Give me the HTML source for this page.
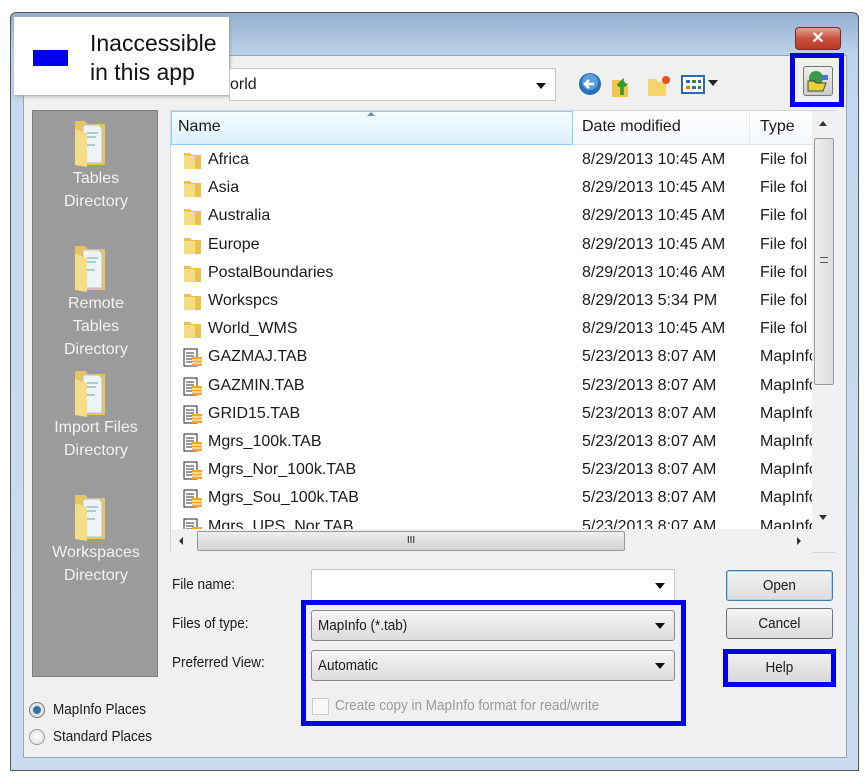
<!DOCTYPE html>
<html><head><meta charset="utf-8"><style>
*{margin:0;padding:0;box-sizing:border-box}
body{width:868px;height:780px;background:#fff;position:relative;overflow:hidden;font-family:"Liberation Sans",sans-serif;color:#1a1a1a}
.a{position:absolute}
.frame{left:10px;top:12px;width:849px;height:759px;border:1px solid #555;border-radius:6px 6px 0 0;background:linear-gradient(#94afd2 0,#bcd2ea 40px,#c5d9ee 100px,#c9dcef 100%)}
.body{left:23px;top:55px;width:824px;height:703px;background:#f0f0f0;border:1px solid #8fa7c1}
.sb{left:32px;top:110px;width:126px;height:567px;background:#9b9b9b;border:1px solid #7d7d7d}
.sbl{color:#f2f2f2;font-size:16px;text-align:center;width:126px;line-height:23px;left:0}
.list{left:170px;top:110px;width:666px;height:443px;background:#fff;border:1px solid #cfd6de}
.hdr{left:0;top:0;height:34px;width:641px;background:linear-gradient(#fff,#f3f8fc);border-bottom:1px solid #d8e2ec}
.row{position:absolute;left:0;height:28px;font-size:16px;line-height:28px;width:641px;white-space:nowrap}
.n{position:absolute;left:37px}
.d{position:absolute;left:411px}
.t{position:absolute;left:589px;width:52px;overflow:hidden}
.ic{position:absolute;left:12px;top:5px;width:20px;height:19px}
.lbl{font-size:15px;transform:scaleX(.9);transform-origin:left}
.cb{height:31px;border:1px solid #8a8a8a;border-radius:3px;background:linear-gradient(#f5f5f5,#dcdcdc);font-size:15px;line-height:29px;padding-left:6px}
.arr{position:absolute;right:9px;top:12px;border:5px solid transparent;border-top:6px solid #111;border-bottom:0}
.btn{width:107px;height:31px;border:1px solid #707070;border-radius:3px;background:linear-gradient(#f3f3f3,#dcdcdc);text-align:center;font-size:16px;line-height:29px}
.blue{border:5px solid #0000ee}
</style></head><body>
<div class="a frame"></div>
<div class="a" style="left:795px;top:27px;width:46px;height:23px;border-radius:4px;border:1px solid #7a2a20;background:linear-gradient(#e9a196,#c7503e 50%,#b83a26);color:#fff;text-align:center;font-weight:bold;font-size:16px;line-height:21px">✕</div>
<div class="a body"></div>
<div class="a" style="left:14px;top:17px;width:215px;height:78px;background:#fff;box-shadow:1px 1px 3px #999"></div>
<div class="a" style="left:33px;top:50px;width:35px;height:16px;background:#0000ee"></div>
<div class="a" style="left:90px;top:29px;font-size:23px;line-height:29px;color:#111">Inaccessible<br>in this app</div>
<div class="a" style="left:229px;top:68px;width:327px;height:33px;background:#fff;border:1px solid #c0c8d2;font-size:16px;line-height:31px">orld<span class="arr" style="top:14px"></span></div>
<svg class="a" style="left:578px;top:70px" width="130" height="30">
<circle cx="12" cy="14" r="11" fill="#2a6fb8"/><circle cx="12" cy="12" r="8" fill="#5aa0dc"/><path d="M16 14H8M11 10l-4 4 4 4" stroke="#fff" stroke-width="2.5" fill="none"/>
<path d="M34 10h8l2 3h6v14H34z" fill="#f2c64c"/><path d="M44 25V12l-4 4M44 12l4 4" stroke="#2e9a2e" stroke-width="3.5" fill="none"/>
<path d="M70 9h8l2 3h8v14H70z" fill="#f5d56a"/><circle cx="88" cy="10" r="4" fill="#e5501c"/>
<rect x="104" y="6" width="22" height="17" fill="#fff" stroke="#2c6ab2" stroke-width="2"/><rect x="108" y="10" width="4" height="3" fill="#2c6ab2"/><rect x="114" y="10" width="4" height="3" fill="#3b8a3b"/><rect x="120" y="10" width="3" height="3" fill="#2c6ab2"/><rect x="108" y="16" width="4" height="3" fill="#e07a1a"/><rect x="114" y="16" width="4" height="3" fill="#2c6ab2"/><rect x="120" y="16" width="3" height="3" fill="#2c6ab2"/>
</svg>
<div class="a" style="left:708px;top:80px;border:5px solid transparent;border-top:6px solid #222"></div>
<div class="a blue" style="left:790px;top:53px;width:54px;height:54px"></div>
<div class="a" style="left:803px;top:66px;width:30px;height:30px;border:1px solid #777;border-radius:3px;background:linear-gradient(#eee,#ccc)"></div>
<svg class="a" style="left:806px;top:69px" width="24" height="24"><circle cx="10" cy="9" r="7" fill="#3a9a4a"/><path d="M2 12h6l2 2h10l-3 8H2z" fill="#e8d23a" stroke="#444"/><rect x="15" y="6" width="7" height="5" fill="#4a7abf"/></svg>
<div class="a sb">
<svg class="a" style="left:40px;top:4px" width="36" height="54"><path d="M2 6h10l3 3h17v41H2z" fill="#e8c45a"/><path d="M10 10h16l3 3v35H10z" fill="#eef3f5" stroke="#b8c0c6"/><path d="M14 18h11M14 22h9M14 30h8" stroke="#6aa" /><path d="M2 14l12 4v34L2 50z" fill="#f6dc84"/></svg>
<div class="a sbl" style="top:56px">Tables<br>Directory</div>
<svg class="a" style="left:40px;top:129px" width="36" height="54"><path d="M2 6h10l3 3h17v41H2z" fill="#e8c45a"/><path d="M10 10h16l3 3v35H10z" fill="#eef3f5" stroke="#b8c0c6"/><path d="M14 18h11M14 22h9M14 30h8" stroke="#6aa" /><path d="M2 14l12 4v34L2 50z" fill="#f6dc84"/></svg>
<div class="a sbl" style="top:181px">Remote<br>Tables<br>Directory</div>
<svg class="a" style="left:40px;top:254px" width="36" height="54"><path d="M2 6h10l3 3h17v41H2z" fill="#e8c45a"/><path d="M10 10h16l3 3v35H10z" fill="#eef3f5" stroke="#b8c0c6"/><path d="M14 18h11M14 22h9M14 30h8" stroke="#6aa" /><path d="M2 14l12 4v34L2 50z" fill="#f6dc84"/></svg>
<div class="a sbl" style="top:305px">Import Files<br>Directory</div>
<svg class="a" style="left:40px;top:378px" width="36" height="54"><path d="M2 6h10l3 3h17v41H2z" fill="#e8c45a"/><path d="M10 10h16l3 3v35H10z" fill="#eef3f5" stroke="#b8c0c6"/><path d="M14 18h11M14 22h9M14 30h8" stroke="#6aa" /><path d="M2 14l12 4v34L2 50z" fill="#f6dc84"/></svg>
<div class="a sbl" style="top:430px">Workspaces<br>Directory</div>
</div>
<div class="a list">
<div class="a hdr">
<div class="a" style="left:0;top:0;width:402px;height:34px;background:linear-gradient(#f4fbff,#dcf0fb);border:1px solid #8fd0f0"></div>
<div class="a" style="left:7px;top:7px;font-size:16px">Name</div>
<div class="a" style="left:196px;top:1px;border:4px solid transparent;border-bottom:4px solid #6a8eb0;border-top:0"></div>
<div class="a" style="left:411px;top:7px;font-size:16px">Date modified</div>
<div class="a" style="left:578px;top:0;width:1px;height:34px;background:#e3e8ee"></div>
<div class="a" style="left:589px;top:7px;font-size:16px">Type</div>
</div>
<div id="rows"></div>
<div class="a" style="left:641px;top:0;width:24px;height:441px;background:#f1f1f1"></div>
<div class="a" style="left:648px;top:10px;border:4px solid transparent;border-bottom:5px solid #333;border-top:0"></div>
<div class="a" style="left:643px;top:27px;width:20px;height:247px;border:1px solid #999;border-radius:2px;background:linear-gradient(90deg,#eee,#dcdcdc)"></div>
<div class="a" style="left:649px;top:146px;width:8px;height:6px;border-top:1px solid #555;border-bottom:1px solid #555"></div>
<div class="a" style="left:648px;top:404px;border:4px solid transparent;border-top:5px solid #333;border-bottom:0"></div>
<div class="a" style="left:0;top:418px;width:641px;height:24px;background:#f1f1f1"></div>
<div class="a" style="left:8px;top:426px;border:4px solid transparent;border-right:4px solid #333;border-left:0"></div>
<div class="a" style="left:26px;top:420px;width:428px;height:20px;border:1px solid #999;border-radius:2px;background:linear-gradient(#eee,#d4d4d4);text-align:center;font-size:10px;line-height:18px">III</div>
<div class="a" style="left:626px;top:426px;border:4px solid transparent;border-left:4px solid #333;border-right:0"></div>
</div>
<div class="a lbl" style="left:172px;top:576px">File name:</div>
<div class="a lbl" style="left:172px;top:615px">Files of type:</div>
<div class="a lbl" style="left:172px;top:654px">Preferred View:</div>
<div class="a" style="left:311px;top:569px;width:364px;height:33px;background:#fff;border:1px solid #c5c5c5;border-radius:2px"><span class="arr" style="top:13px"></span></div>
<div class="a blue" style="left:301px;top:600px;width:385px;height:126px"></div>
<div class="a cb" style="left:311px;top:610px;width:364px"><span class="lbl" style="display:inline-block">MapInfo (*.tab)</span><span class="arr"></span></div>
<div class="a cb" style="left:311px;top:650px;width:364px"><span class="lbl" style="display:inline-block">Automatic</span><span class="arr"></span></div>
<div class="a" style="left:312px;top:698px;width:17px;height:17px;border:1px solid #ccc;background:#f8f8f8"></div>
<div class="a lbl" style="left:335px;top:697px;color:#9a9a9a">Create copy in MapInfo format for read/write</div>
<div class="a btn" style="left:726px;top:570px;border-color:#3c7fb1;box-shadow:inset 0 0 0 1px #9ed6f5"><span class="lbl" style="display:inline-block;transform-origin:center">Open</span></div>
<div class="a btn" style="left:726px;top:608px"><span class="lbl" style="display:inline-block;transform-origin:center">Cancel</span></div>
<div class="a blue" style="left:723px;top:649px;width:113px;height:38px;background:linear-gradient(#f0f0f0,#d8d8d8);text-align:center;line-height:28px"><span class="lbl" style="display:inline-block;transform-origin:center">Help</span></div>
<div class="a" style="left:29px;top:702px;width:16px;height:16px;border-radius:50%;border:1px solid #777;background:radial-gradient(#2a6fae 35%,#e5e5e5 45%)"></div>
<div class="a lbl" style="left:53px;top:701px">MapInfo Places</div>
<div class="a" style="left:29px;top:729px;width:16px;height:16px;border-radius:50%;border:1px solid #999;background:radial-gradient(#fff,#ddd)"></div>
<div class="a lbl" style="left:53px;top:728px">Standard Places</div>
<script>
var R=[["Africa","8/29/2013 10:45 AM","File fol",0],["Asia","8/29/2013 10:45 AM","File fol",0],["Australia","8/29/2013 10:45 AM","File fol",0],["Europe","8/29/2013 10:45 AM","File fol",0],["PostalBoundaries","8/29/2013 10:46 AM","File fol",0],["Workspcs","8/29/2013 5:34 PM","File fol",0],["World_WMS","8/29/2013 10:45 AM","File fol",0],["GAZMAJ.TAB","5/23/2013 8:07 AM","MapInfo",1],["GAZMIN.TAB","5/23/2013 8:07 AM","MapInfo",1],["GRID15.TAB","5/23/2013 8:07 AM","MapInfo",1],["Mgrs_100k.TAB","5/23/2013 8:07 AM","MapInfo",1],["Mgrs_Nor_100k.TAB","5/23/2013 8:07 AM","MapInfo",1],["Mgrs_Sou_100k.TAB","5/23/2013 8:07 AM","MapInfo",1],["Mgrs_UPS_Nor.TAB","5/23/2013 8:07 AM","MapInfo",1]];
var h='';R.forEach(function(r,i){var ic=r[3]?'<svg class="ic" viewBox="0 0 20 19"><rect x="1" y="1" width="13" height="17" fill="#fff" stroke="#222"/><path d="M3 5h8M3 8h8M3 11h6M3 14h6" stroke="#333"/><path d="M9 9h10v9H9z" fill="#f5a623"/><path d="M9 12h10M9 15h10" stroke="#fff"/></svg>':'<svg class="ic" viewBox="0 0 20 19"><path d="M1 2h6l2 2h9v14H1z" fill="#e9c24e"/><path d="M1 5h11v13H1z" fill="#f6dc84"/></svg>';
h+='<div class="row" style="top:'+(35+i*28.2)+'px">'+ic+'<span class="n">'+r[0]+'</span><span class="d">'+r[1]+'</span><span class="t">'+r[2]+'</span></div>'});
document.getElementById('rows').innerHTML=h;
</script>
</body></html>
